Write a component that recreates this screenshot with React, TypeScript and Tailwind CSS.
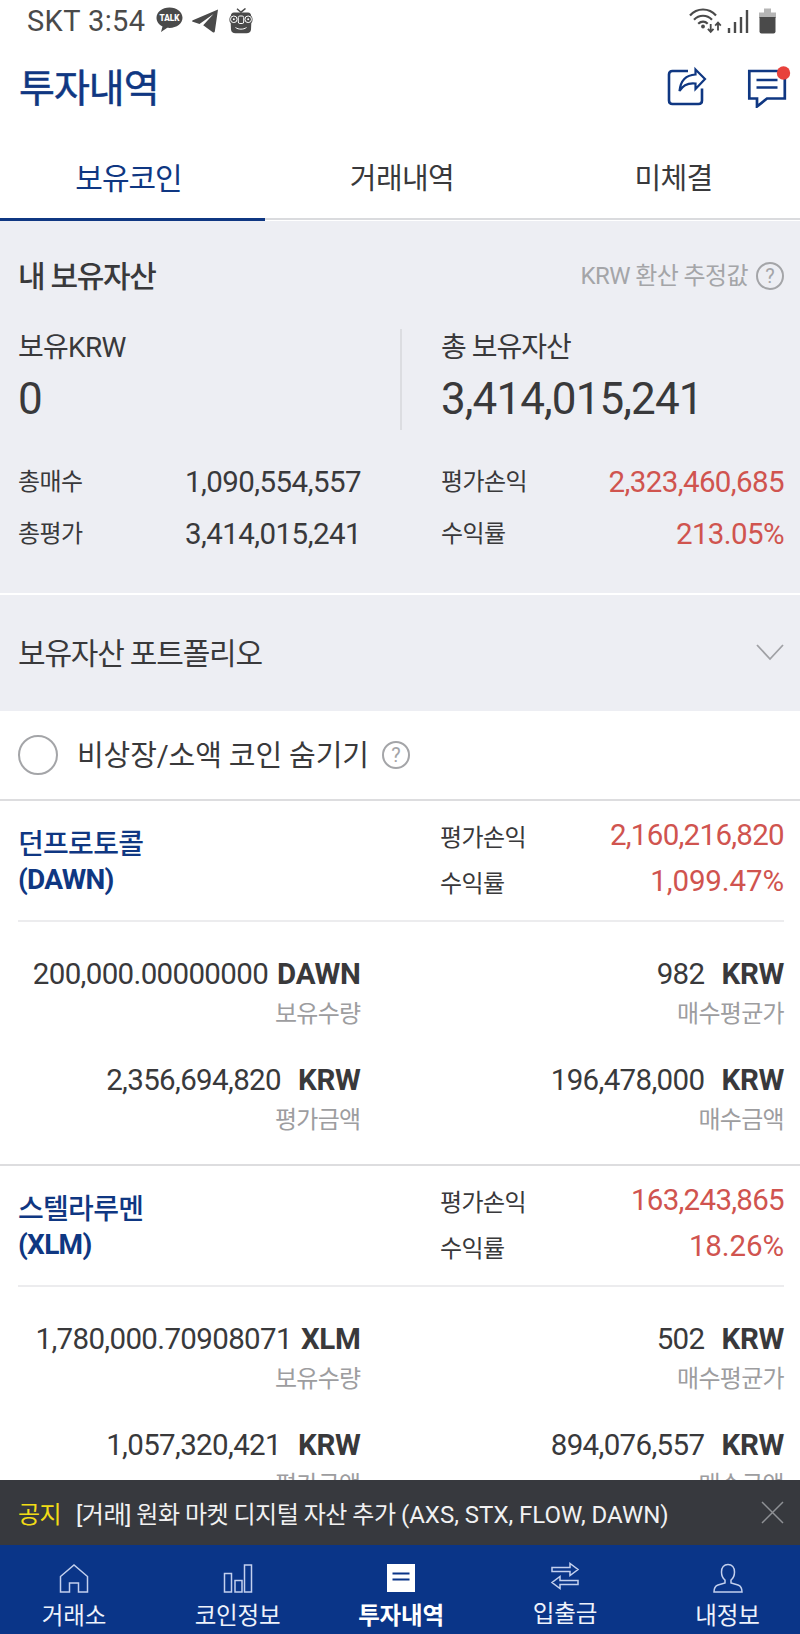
import type { ReactNode } from 'react'
import clsx from 'clsx'

type Coin = {
  name: string
  symbol: string
  profit: string
  rate: string
  cells: { value: string; unit: string; label: string }[]
}

const coins: Coin[] = [
  {
    name: '던프로토콜',
    symbol: 'DAWN',
    profit: '2,160,216,820',
    rate: '1,099.47%',
    cells: [
      { value: '200,000.00000000', unit: 'DAWN', label: '보유수량' },
      { value: '982', unit: 'KRW', label: '매수평균가' },
      { value: '2,356,694,820', unit: 'KRW', label: '평가금액' },
      { value: '196,478,000', unit: 'KRW', label: '매수금액' },
    ],
  },
  {
    name: '스텔라루멘',
    symbol: 'XLM',
    profit: '163,243,865',
    rate: '18.26%',
    cells: [
      { value: '1,780,000.70908071', unit: 'XLM', label: '보유수량' },
      { value: '502', unit: 'KRW', label: '매수평균가' },
      { value: '1,057,320,421', unit: 'KRW', label: '평가금액' },
      { value: '894,076,557', unit: 'KRW', label: '매수금액' },
    ],
  },
]

function StatusBar() {
  return (
    <div className="flex h-[42px] items-center pl-[27px] pr-[24px] text-[#4a4a4a]">
      <span className="text-[29px] leading-[44px] tracking-[0.4px]">SKT 3:54</span>
      <svg className="ml-[11px] -mt-[2px]" width="27" height="26" viewBox="0 0 27 26">
        <path d="M13.5 0.5C6.2 0.5.5 5 .5 10.800c0 3.900 2.500 7 6 8.700L5 25l6.300-4.200c.7.1 1.500.1 2.200.1 7.300 0 13-4.400 13-10.100S20.800.5 13.500.5z" fill="currentColor" />
        <text x="13.500" y="14.300" textAnchor="middle" fontSize="9.500" fontWeight="900" fill="#fff" textLength="20" lengthAdjust="spacingAndGlyphs">TALK</text>
      </svg>
      <svg className="ml-[9px]" width="26" height="24" viewBox="0 0 26 24">
        <path d="M26 0.500 0.800 11.200c-1 .5-1 1.200 0 1.500l6.700 2.200L21.500 5 11.200 16.200 20.800 23.200c1 .6 1.800.3 2-.8z" fill="currentColor" />
      </svg>
      <svg className="ml-[11px] -mt-[1px]" width="24" height="26" viewBox="0 0 24 26">
        <path d="M8 .8 12 4.200 16.500 .5" fill="none" stroke="currentColor" strokeWidth="1.500" />
        <path d="M5 4.500h14c2 0 3 1.500 3.200 3.500C24 9 24 14 22.300 15l-.3 6.500c-.3 2.500-1.700 3.800-4.500 3.800h-11c-2.800 0-4.200-1.300-4.500-3.800L1.700 15C0 14 0 9 1.800 8 2 6 3 4.500 5 4.500z" fill="currentColor" />
        <g fill="none" stroke="#fff" strokeWidth="1">
          <rect x="9.300" y="8" width="5.400" height="7.500" rx="1.500" />
          <circle cx="4.800" cy="11.300" r="3.300" />
          <circle cx="19.200" cy="11.300" r="3.300" />
          <path d="M6.500 19.500c3 2.200 8 2.200 11 0" />
        </g>
        <circle cx="4.800" cy="11.300" r="1" fill="#fff" />
        <circle cx="19.200" cy="11.300" r="1" fill="#fff" />
      </svg>
      <svg className="ml-auto -mt-[1px]" width="33" height="27" viewBox="0 0 33 27">
        <g fill="none" stroke="currentColor" strokeWidth="2.200">
          <path d="M1 8.500C8 .5 20 .5 27 8.500" />
          <path d="M5 12.800c5-5.400 13-5.400 18 0" />
          <path d="M9.200 16.800c3-2.800 6.800-2.800 9.500 0" />
        </g>
        <circle cx="14" cy="19.500" r="1.900" fill="currentColor" />
        <path d="M21.700 17v8M18.900 21.800l2.800 3.200 2.800-3.200M29 23.500v-8M26.200 18.700l2.800-3.200 2.800 3.200" fill="none" stroke="currentColor" strokeWidth="1.800" />
      </svg>
      <svg className="ml-[5px]" width="22" height="24" viewBox="0 0 22 24">
        <path d="M2 19v5M8 13v11M14 8v16M20 1v23" stroke="currentColor" strokeWidth="2.400" />
      </svg>
      <svg className="ml-[10px] -mt-[1px]" width="17" height="26" viewBox="0 0 17 26">
        <path d="M5 .5h7v4h5V10H0V4.500h5z" fill="#b5b5b5" />
        <path d="M.5 9h16v14.500q0 2-2 2h-12q-2 0-2-2z" fill="currentColor" />
      </svg>
    </div>
  )
}

function Header() {
  return (
    <header className="flex h-[92px] items-center pl-[19px] pr-[9px] text-[#0f3782]">
      <h1 className="pt-[2px] text-[39px] leading-[92px] tracking-[-1px] [-webkit-text-stroke:0.5px]">투자내역</h1>
      <svg className="ml-auto -mt-[4px]" width="40" height="40" viewBox="0 0 40 40" fill="none" stroke="currentColor" strokeWidth="2.600">
        <path d="M21 5H5.500Q2 5 2 8.500v26Q2 38 5.500 38h26q3.500 0 3.500-3.500V22.500" />
        <path d="M28.500 3.500 38 13l-9.500 10v-5.500c-7-.8-12.500 1.500-16 7.500 1-10 6.500-16 16-16.500z" strokeWidth="2.200" />
      </svg>
      <svg className="ml-[40px] -mt-[4px]" width="44" height="44" viewBox="0 0 44 44">
        <path d="M2.300 7h35.500v27.500H20L10 42.500v-8H2.300z" fill="none" stroke="currentColor" strokeWidth="2.700" />
        <path d="M9.500 16h21M9.500 23.500h21" stroke="currentColor" strokeWidth="2.700" />
        <circle cx="36.500" cy="9" r="6.700" fill="#e8413c" />
      </svg>
    </header>
  )
}

function Tabs() {
  const base = 'flex h-[86px] justify-center border-b-2 border-[#dadbde] text-[29px] leading-[90px] tracking-[-0.6px]'
  return (
    <nav className="grid h-[87px] grid-cols-[265px_274px_261px] bg-white text-center">
      <span className="h-[87px] border-b-[3px] border-[#0f3782] pr-[8px] text-[30px] leading-[90px] tracking-[-1px] text-[#0f3782]">보유코인</span>
      <span className={base}>거래내역</span>
      <span className={base}><span className="ml-[8px]">미체결</span></span>
    </nav>
  )
}

function Help() {
  return (
    <span className="flex size-[28px] items-center justify-center rounded-full border-2 border-[#a4a5a8] text-[20px] leading-none tracking-normal text-[#a4a5a8]">
      ?
    </span>
  )
}

function Summary() {
  const rows = [
    ['총매수', '1,090,554,557', '평가손익', '2,323,460,685'],
    ['총평가', '3,414,015,241', '수익률', '213.05%'],
  ]
  return (
    <section className="h-[372px] bg-[#edeef3] pl-[18px] pr-[16px] pt-[30px]">
      <div className="flex h-[50px] items-center justify-between">
        <h2 className="pt-[1px] text-[30px] font-medium tracking-[-1.300px]">내 보유자산</h2>
        <div className="flex items-center gap-[8px] text-[24px] tracking-[-0.6px] text-[#a4a5a8]">
          KRW 환산 추정값
          <Help />
        </div>
      </div>

      <div className="mt-[28px] flex h-[101px]">
        <div className="w-[384px] border-r-2 border-[#dcdde1]">
          <p className="text-[28px] leading-[37px] tracking-[-0.7px]">보유KRW</p>
          <p className="text-[44px] leading-[67px] tracking-[-0.9px]">0</p>
        </div>
        <div className="pl-[39px]">
          <p className="text-[28px] leading-[37px] tracking-[-1px]">총 보유자산</p>
          <p className="text-[44px] leading-[67px] tracking-[-0.900px]">3,414,015,241</p>
        </div>
      </div>

      <div className="mt-[26px]">
        {rows.map(([a, b, c, d]) => (
          <div key={a} className="grid h-[52px] grid-cols-[100px_243px_80px_1fr] items-center text-[29.500px]">
            <span className="text-[24px] tracking-[-0.6px]">{a}</span>
            <span className="pt-[1px] text-right tracking-[-0.550px]">{b}</span>
            <span className="ml-[80px] whitespace-nowrap text-[24px] tracking-[-0.6px]">{c}</span>
            <span className="pt-[1px] text-right tracking-[-0.6px] text-[#d0544f]">{d}</span>
          </div>
        ))}
      </div>
    </section>
  )
}

function CoinCard({ coin }: { coin: Coin }) {
  return (
    <article className="h-[365px] shrink-0 border-b-2 border-[#dddddf]">
      <div className="mx-[18px] mr-[16px] flex h-[121px] border-b-2 border-[#ececee] pt-[11px]">
        <h3 className="w-[422px] pt-[15px] text-[28px] leading-[35px] font-bold tracking-[-0.7px] text-[#0f3782]">
          <span className="block font-medium">{coin.name}</span>
          ({coin.symbol})
        </h3>
        <dl className="grid flex-1 auto-rows-[46px] grid-cols-[100px_1fr] text-[29.500px] leading-[46px]">
          <dt className="pt-[3px] text-[24px] tracking-[-0.6px]">평가손익</dt>
          <dd className="text-right tracking-[-0.7px] text-[#d0544f]">{coin.profit}</dd>
          <dt className="pt-[3px] text-[24px] tracking-[-0.6px]">수익률</dt>
          <dd className="text-right tracking-[-0.1px] text-[#d0544f]">{coin.rate}</dd>
        </dl>
      </div>
      <div className="grid auto-rows-[106px] grid-cols-[360.500px_423.500px] pt-[32px] text-right">
        {coin.cells.map((cell) => (
          <div key={cell.label}>
            <p className="text-[29.500px] leading-[40px] tracking-[-0.650px]">
              {cell.value}
              <b className={clsx('tracking-[-0.3px]', cell.unit === 'KRW' ? 'ml-[17px]' : 'ml-[9px]')}>{cell.unit}</b>
            </p>
            <p className="text-[24px] leading-[40px] tracking-[-0.7px] text-[#9d9d9f]">{cell.label}</p>
          </div>
        ))}
      </div>
    </article>
  )
}

function NoticeBar() {
  return (
    <div className="flex h-[65px] items-center bg-[#37393e] pl-[18px] pr-[16px] text-[24px] text-[#f1f1f2]">
      <span className="pt-[4px] tracking-[-0.6px] text-[#f2dc16]">공지</span>
      <span className="ml-[15px] pt-[4px] whitespace-pre">
        <span className="tracking-[-0.500px]">[거래] 원화 마켓 디지털 자산 추가 </span>
        (AXS, STX, FLOW, DAWN)
      </span>
      <svg className="ml-auto" width="23" height="23" viewBox="0 0 23 23">
        <path d="m1 1 21 21M22 1 1 22" stroke="#8f9195" strokeWidth="1.500" />
      </svg>
    </div>
  )
}

function NavItem({ label, active, raised, children }: { label: string; active?: boolean; raised?: boolean; children: ReactNode }) {
  return (
    <div className={clsx('flex flex-col items-center', raised ? 'pt-[16px]' : 'pt-[18px]')}>
      <svg width="30" height="30" viewBox="0 0 30 30" fill="none" stroke={active ? '#fff' : '#c3d0ee'} strokeWidth="1.500">
        {children}
      </svg>
      <span className={clsx('mt-[5px] text-[23.500px] leading-[37px] tracking-[-0.2px]', active ? 'font-bold text-white' : 'text-[#eef2fb]')}>{label}</span>
    </div>
  )
}

function BottomNav() {
  return (
    <nav className="grid h-[89px] grid-cols-[148px_179px_148px_180px_145px] bg-[#0a3588]">
      <NavItem label="거래소">
        <path d="M1.500 13.500 15 2l13.500 11.500V29H19.500V20h-9v9h-9z" />
      </NavItem>
      <NavItem label="코인정보">
        <path d="M1.500 10.500h7V29h-7zM12 17.500h7V29h-7zM21.500 2h7v27h-7z" />
      </NavItem>
      <NavItem label="투자내역" active>
        <path d="M1 1h28v28H1z" fill="#fff" stroke="none" />
        <path d="M6.500 10.500h17M6.500 16.500h17" stroke="#0a3588" strokeWidth="2" />
      </NavItem>
      <NavItem label="입출금" raised>
        <path d="M2 6.500h18V2.500l8 6-8 6v-4H2zM28 19.500H10v-4l-8 6 8 6v-4h18z" />
      </NavItem>
      <NavItem label="내정보">
        <path d="M15 1.500c-4 0-6.500 3-6.500 7.500 0 4 1.500 6.500 3.500 8v3L5 22c-3 1-4 3.500-4 7h28c0-3.500-1-6-4-7l-7-2v-3c2-1.500 3.500-4 3.500-8 0-4.500-2.500-7.500-6.500-7.500z" />
      </NavItem>
    </nav>
  )
}

export default function App() {
  return (
    <div className="flex h-[1634px] w-[800px] flex-col overflow-hidden bg-white font-['Roboto','Noto_Sans_CJK_KR',sans-serif] text-[#39393b]">
      <StatusBar />
      <Header />
      <Tabs />
      <Summary />

      {/* Portfolio */}
      <section className="mt-[2px] flex h-[116px] items-center justify-between bg-[#edeef3] pl-[18px] pr-[16px]">
        <h2 className="text-[30px] tracking-[-1.200px]">보유자산 포트폴리오</h2>
        <svg className="-mt-[1px]" width="28" height="17" viewBox="0 0 28 17">
          <path d="m1 1 13 14L27 1" fill="none" stroke="#a0a1a5" strokeWidth="1.800" />
        </svg>
      </section>

      <div className="flex h-[90px] shrink-0 items-center border-b-2 border-[#dddddf] pl-[18px]">
        <span className="size-[40px] rounded-full border-2 border-[#a4a5a8]" />
        <span className="ml-[19px] mr-[13px] pt-[4px] text-[29px] tracking-[-0.100px]">비상장/소액 코인 숨기기</span>
        <Help />
      </div>

      {/* Coin list */}
      <main className="flex min-h-0 flex-1 flex-col overflow-hidden">
        {coins.map((coin) => (
          <CoinCard key={coin.symbol} coin={coin} />
        ))}
      </main>

      <NoticeBar />
      <BottomNav />
    </div>
  )
}
